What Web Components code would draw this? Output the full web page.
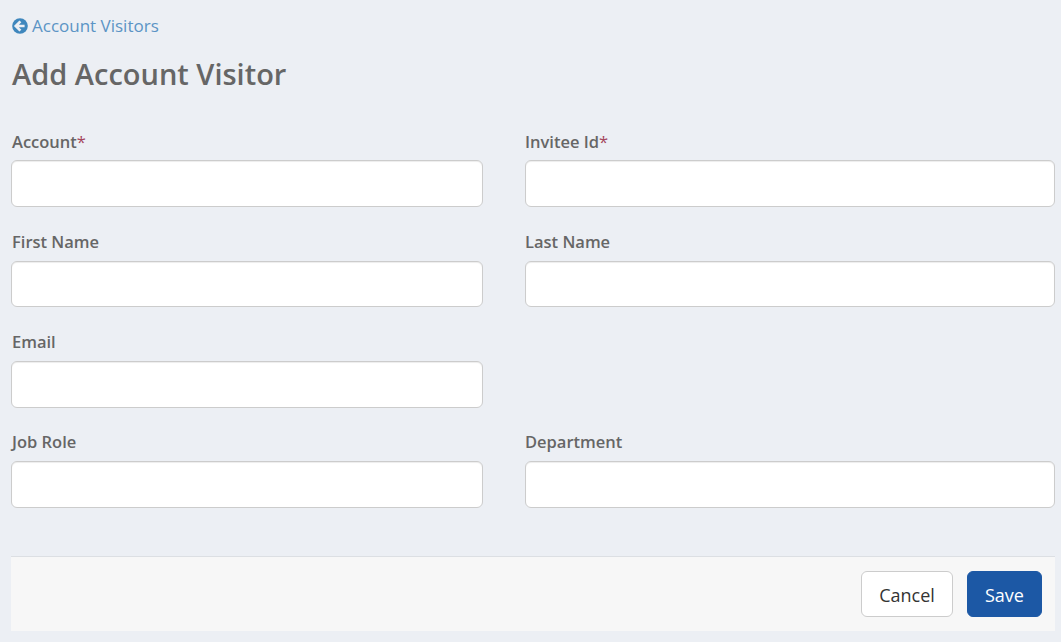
<!DOCTYPE html>
<html>
<head>
<meta charset="utf-8">
<title>Add Account Visitor</title>
<style>
  html, body { margin: 0; padding: 0; background: #eceff4; }
  body { font-family: "Open Sans", "Noto Sans", sans-serif; color: #666; }
</style>
</head>
<body>
<visitor-page>
  <back-link slot="back">Account Visitors</back-link>
  <span slot="title">Add Account Visitor</span>
  <form-field label="Account" required></form-field>
  <form-field label="Invitee Id" required></form-field>
  <form-field label="First Name"></form-field>
  <form-field label="Last Name"></form-field>
  <form-field label="Email"></form-field>
  <div></div>
  <form-field label="Job Role"></form-field>
  <form-field label="Department"></form-field>
  <form-footer slot="footer"></form-footer>
</visitor-page>
<script>
class VisitorPage extends HTMLElement {
  constructor () {
    super()
    this.shadow = this.attachShadow({ mode: 'open' })
  }

  connectedCallback () {
    this.shadow.innerHTML = `
      <style>
        :host { display: block; padding: 15px 6px 11px 11px; box-sizing: border-box; height: 642px; }
        .back { height: 22px; padding-left: 1px; }
        h1 {
          margin: 18px 0 0;
          padding-left: 1px;
          font-size: 29px;
          line-height: 38px;
          font-weight: 600;
          color: #666;
        }
        .grid {
          display: grid;
          grid-template-columns: 472px 530px;
          column-gap: 42px;
          margin-top: 37.4px;
        }
        .foot { margin-top: 24.8px; }
      </style>
      <div class="back"><slot name="back"></slot></div>
      <h1><slot name="title"></slot></h1>
      <div class="grid"><slot></slot></div>
      <div class="foot"><slot name="footer"></slot></div>
    `
  }
}

class BackLink extends HTMLElement {
  constructor () {
    super()
    this.shadow = this.attachShadow({ mode: 'open' })
  }

  connectedCallback () {
    this.shadow.innerHTML = `
      <style>
        :host { display: flex; align-items: center; gap: 4px; color: #5b94c5; font-size: 17px; line-height: 22px; }
        svg { width: 16px; height: 16px; display: block; margin-top: -1px; }
      </style>
      <svg viewBox="0 0 16 16">
        <circle cx="8" cy="8" r="7.8" fill="#3f87bd"/>
        <path d="M8.4 3.4 L3.8 8 L8.4 12.6 M4.4 8 H12.6" fill="none" stroke="#eceff4" stroke-width="2.7"/>
      </svg>
      <span><slot></slot></span>
    `
  }
}

class FormField extends HTMLElement {
  constructor () {
    super()
    this.shadow = this.attachShadow({ mode: 'open' })
  }

  connectedCallback () {
    const star = this.hasAttribute('required') ? '<span class="req">*</span>' : ''
    this.shadow.innerHTML = `
      <style>
        :host { display: block; height: 100.2px; }
        label {
          display: block;
          box-sizing: border-box;
          height: 30px;
          padding: 0.2px 0 0 1px;
          font-size: 16.5px;
          line-height: 22px;
          font-weight: 600;
          color: #666;
        }
        :host(:nth-child(even)) label { padding-left: 0; }
        .req { color: #a4455c; font-weight: 400; }
        input {
          display: block;
          width: 100%;
          height: 46.8px;
          box-sizing: border-box;
          border: 1px solid #ccc;
          border-radius: 6px;
          background: #fff;
          box-shadow: inset 0 1px 1px rgba(0,0,0,.075);
          padding: 6px 12px;
          margin: 0;
        }
      </style>
      <label>${this.getAttribute('label')}${star}</label>
      <input type="text">
    `
  }
}

class FormFooter extends HTMLElement {
  constructor () {
    super()
    this.shadow = this.attachShadow({ mode: 'open' })
  }

  connectedCallback () {
    this.shadow.innerHTML = `
      <style>
        :host {
          display: flex;
          justify-content: flex-end;
          gap: 14px;
          background: #f7f7f7;
          border-top: 1px solid #dcdfe3;
          padding: 14px 13px 14px 0;
        }
        button {
          font: 400 18px/24px "Open Sans", "Noto Sans", sans-serif;
          height: 46px;
          border-radius: 6px;
          box-sizing: border-box;
          padding: 2px 0 0;
        }
        .cancel { width: 92px; background: #fff; border: 1px solid #ccc; color: #333; }
        .save { width: 75px; background: #1c58a5; border: 1px solid #1c58a5; color: #fff; }
      </style>
      <button class="cancel" type="button">Cancel</button>
      <button class="save" type="button">Save</button>
    `
  }
}

customElements.define('visitor-page', VisitorPage)
customElements.define('back-link', BackLink)
customElements.define('form-field', FormField)
customElements.define('form-footer', FormFooter)
</script>
</body>
</html>
